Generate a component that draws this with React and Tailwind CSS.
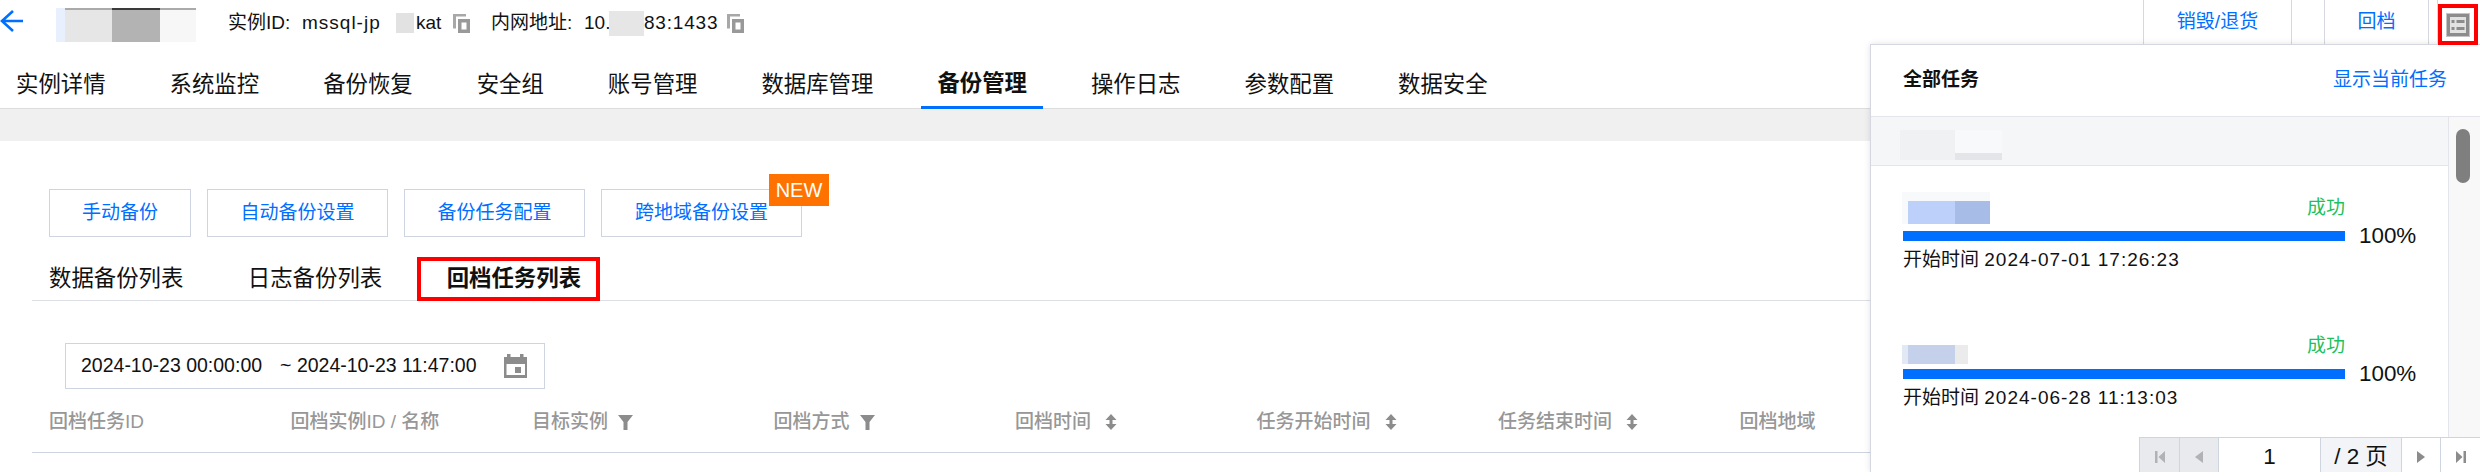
import React from 'react'

const tabs = ['实例详情', '系统监控', '备份恢复', '安全组', '账号管理', '数据库管理', '备份管理', '操作日志', '参数配置', '数据安全']

const CopyIcon = () => (
  <svg width="17" height="19" viewBox="0 0 17 19" className="shrink-0">
    <path d="M0 0h13v2.500H3v12H0z" fill="#a8a8a8" />
    <path fillRule="evenodd" d="M5 5h12v14H5zM8.500 8.500v7h5v-7z" fill="#999" />
  </svg>
)

const FilterIcon = () => (
  <svg width="15" height="15" viewBox="0 0 15 15" className="shrink-0">
    <path d="M0 0h15L9.500 7v8h-4V7z" fill="#8c8c8c" />
  </svg>
)

const SortIcon = () => (
  <svg width="12" height="16" viewBox="0 0 12 16" className="shrink-0 ml-[4px]">
    <path d="M6 0l5.500 6H.5zM6 16L.5 10h11z" fill="#8c8c8c" />
    <rect x="4.500" y="5" width="3" height="6" fill="#8c8c8c" />
  </svg>
)

const Column = ({ label, icon }) => (
  <div className="flex items-center gap-[10px] font-medium whitespace-nowrap">
    <span>{label}</span>
    {icon}
  </div>
)

const TaskItem = ({ blur, day, className }) => (
  <div className={`relative w-[546px] pl-[32px] ${className}`}>
    <div className="h-[39px] w-[442px] pt-[4px] text-right">
      <span className="text-[#1fc05e] text-[19px] leading-[23px]">成功</span>
    </div>
    {blur}
    <div className="flex items-center">
      <div className="h-[10px] w-[442px] bg-[#006eff]" />
      <span className="ml-[14px] text-[22.400px] leading-[10px] text-[#111]">100%</span>
    </div>
    <div className="mt-[7px] text-[19px] leading-[24px] text-[#111] whitespace-nowrap">
      开始时间 <span className="tracking-[1px]">{day}</span>
    </div>
  </div>
)

const PagerCell = ({ className, children }) => (
  <div className={`h-full flex items-center justify-center border-l border-[#cfd5de] pt-[4px] ${className}`}>{children}</div>
)

export default function App() {
  return (
    <div
      className="relative w-[2480px] h-[472px] overflow-hidden bg-white text-[#111]"
      style={{ fontFamily: '"Liberation Sans", "Noto Sans CJK SC", sans-serif' }}
    >
      {/* top bar */}
      <div className="flex h-[44px]">
        <svg width="24" height="24" viewBox="0 0 24 24" className="mt-[9px] shrink-0">
          <path d="M13 2L2 12l11 10M2 12h21" fill="none" stroke="#006eff" strokeWidth="2.600" />
        </svg>
        <div className="ml-[32px] mt-[8px] flex h-[34px] w-[140px] shrink-0">
          <div className="w-[9px] bg-[#e8f0fe]" />
          <div className="w-[47px] bg-[#e6e6e6] border-t-2 border-[#aaa]" />
          <div className="w-[48px] bg-[#b3b3b3] border-t-2 border-[#3a3a3a]" />
          <div className="w-[36px] bg-[#f7f7f7] border-t-2 border-[#aaa]" />
        </div>
        <div className="ml-[32px] flex items-center text-[19px] h-[46px] whitespace-nowrap">
          <span className="w-[74px]">实例ID:</span>
          <span className="w-[78px] tracking-[1px]">mssql-jp</span>
          <span className="ml-[16px] w-[18px] h-[20px] bg-[#e2e2e2]" />
          <span className="ml-[2px] w-[27px]">kat</span>
          <span className="ml-[10px]"><CopyIcon /></span>
          <span className="ml-[21px] w-[93px]">内网地址:</span>
          <span className="w-[25px]">10.</span>
          <span className="w-[35px] h-[25px] bg-[#e6e6e6]" />
          <span className="w-[73px] tracking-[0.800px]">83:1433</span>
          <span className="ml-[10px]"><CopyIcon /></span>
        </div>
        <div className="ml-auto flex text-[19px] text-[#006eff]">
          <div className="w-[149px] flex items-center justify-center border-x border-[#d5d8e0]">销毁/退货</div>
          <div className="ml-[32px] w-[105px] flex items-center justify-center border-x border-[#d5d8e0]">回档</div>
          <div className="ml-[8px] mr-[2px] w-[41px] border-l border-[#d5d8e0] relative z-10">
            <div className="mt-[4px] w-[40px] h-[41px] border-4 border-[#f00] flex items-center justify-center bg-white">
              <svg width="24" height="24" viewBox="0 0 24 24">
                <rect width="24" height="24" fill="#c4c4c4" />
                <rect x="1" y="1" width="22" height="22" fill="#8c8c8c" />
                <rect x="4" y="4" width="16" height="16" fill="#e2e2e2" />
                <path d="M5.500 7h3v3h-3zM10.500 7h8v3h-8zM5.500 14h3v3h-3zM10.500 14h8v3h-8z" fill="#8c8c8c" />
              </svg>
            </div>
          </div>
        </div>
      </div>

      {/* tabs */}
      <div className="flex gap-[32px] h-[65px] border-b border-[#dcdcdc] text-[22.400px]">
        {tabs.map((t) => (
          <div
            key={t}
            className={`px-[16px] h-[65px] flex items-center pt-[17px] whitespace-nowrap ${
              t === '备份管理' ? 'font-bold border-b-[3px] border-[#006eff]' : ''
            }`}
          >
            {t}
          </div>
        ))}
      </div>
      <div className="h-[32px] bg-[#f0f0f0]" />

      {/* content */}
      <div className="pl-[32px]">
        <div className="mt-[48px] ml-[17px] flex gap-[16px] text-[19px] text-[#006eff]">
          {[
            ['手动备份', 'w-[142px]'],
            ['自动备份设置', 'w-[181px]'],
            ['备份任务配置', 'w-[181px]'],
            ['跨地域备份设置', 'w-[201px]'],
          ].map(([t, w]) => (
            <div key={t} className={`relative h-[48px] flex items-center justify-center border border-[#ced4e0] ${w}`}>
              {t}
              {t === '跨地域备份设置' && (
                <span className="absolute left-[167px] -top-[16px] w-[60px] h-[32px] bg-[#ff7200] text-white text-[20px] flex items-center justify-center">NEW</span>
              )}
            </div>
          ))}
        </div>

        <div className="mt-[20px] pl-[17px] flex gap-[64.500px] h-[44px] border-b border-[#dcdfe6] text-[22.400px] whitespace-nowrap">
          <div className="flex items-center">数据备份列表</div>
          <div className="flex items-center">日志备份列表</div>
          <div className="-ml-[30px] pl-[26px] pr-[15px] h-[44px] flex items-center font-bold border-4 border-[#f00]">回档任务列表</div>
        </div>

        <div className="mt-[42px] ml-[33px] w-[480px] h-[46px] flex items-center border border-[#ced4e0] pl-[15px] pr-[17px] text-[19.500px] whitespace-nowrap">
          <span>2024-10-23 00:00:00</span>
          <span className="ml-[18px]">~ 2024-10-23 11:47:00</span>
          <svg width="23" height="24" viewBox="0 0 23 24" className="ml-auto shrink-0">
            <path d="M3 0h3.500v4H3zM16 0h3.500v4H16z" fill="#8c8c8c" />
            <path fillRule="evenodd" d="M0 3h23v21H0zM2.500 10v11h18.500V10z" fill="#8c8c8c" />
            <rect x="11" y="13" width="6" height="6" fill="#8c8c8c" />
          </svg>
        </div>

        <div className="mt-[13px] pl-[17px] h-[51px] border-b border-[#ced4e0] grid grid-cols-[241.500px_241.500px_241.500px_241.500px_241.500px_241.500px_241.500px_241.500px] items-center text-[19px] text-[#979797] pb-[10px]">
          <Column label="回档任务ID" />
          <Column label="回档实例ID / 名称" />
          <Column label="目标实例" icon={<FilterIcon />} />
          <Column label="回档方式" icon={<FilterIcon />} />
          <Column label="回档时间" icon={<SortIcon />} />
          <Column label="任务开始时间" icon={<SortIcon />} />
          <Column label="任务结束时间" icon={<SortIcon />} />
          <Column label="回档地域" />
        </div>
      </div>

      {/* all tasks panel */}
      <div className="absolute left-[1870px] top-[44px] right-0 bottom-0 bg-white border-l border-t border-[#d5d8e0] shadow-[0_0_6px_rgba(0,0,0,0.12)] flex flex-col">
        <div className="h-[72px] shrink-0 flex items-center justify-between pl-[32px] pr-[33px] text-[19px] border-b border-[#e3e5ea]">
          <span className="font-bold">全部任务</span>
          <span className="text-[#006eff]">显示当前任务</span>
        </div>
        <div className="flex h-[320px] shrink-0 overflow-hidden">
          <div className="w-[578px] border-r border-[#e3e5ea] overflow-hidden">
            <div className="h-[49px] bg-[#f5f6f8] border-b border-[#e3e5ea] pl-[29px] pt-[13px]">
              <div className="flex h-[30px] w-[102px]">
                <div className="w-[55px] bg-[#f0f1f2]" />
                <div className="w-[47px] flex flex-col">
                  <div className="h-[23px] bg-[#f8f9fa]" />
                  <div className="h-[7px] bg-[#e4e5e8]" />
                </div>
              </div>
            </div>
            <TaskItem
              className="mt-[26px]"
              day="2024-07-01 17:26:23"
              blur={
                <div className="absolute left-[31px] top-0 flex h-[32px] w-[88px] bg-[#f8f9fb] pt-[9px] pl-[6px]">
                  <div className="w-[47px] bg-[#bdd0fa]" />
                  <div className="w-[35px] bg-[#a7bde8]" />
                </div>
              }
            />
            <TaskItem
              className="mt-[58px]"
              day="2024-06-28 11:13:03"
              blur={
                <div className="absolute left-[31px] top-[15px] flex h-[19px] w-[66px]">
                  <div className="w-[6px] bg-[#e3e8f5]" />
                  <div className="w-[47px] bg-[#c5d0ea]" />
                  <div className="w-[13px] bg-[#ebebeb]" />
                </div>
              }
            />
          </div>
          <div className="flex-1 bg-[#f8f8f8] pt-[12px] pl-[7px]">
            <div className="w-[14px] h-[54px] rounded-full bg-[#7f7f7f]" />
          </div>
        </div>
        <div className="flex justify-end h-[35px] shrink-0">
          <div className="flex border-t border-[#cfd5de] text-[22.400px] h-[35px]">
            <PagerCell className="w-[40px] bg-[#e8eaee]">
              <svg width="10" height="12" viewBox="0 0 10 12"><path d="M0 0h2.500v12H0zM10 0v12L3.500 6z" fill="#b0b2b6" /></svg>
            </PagerCell>
            <PagerCell className="w-[39px] bg-[#e8eaee]">
              <svg width="8" height="12" viewBox="0 0 8 12"><path d="M8 0v12L0 6z" fill="#b0b2b6" /></svg>
            </PagerCell>
            <PagerCell className="w-[102px]">1</PagerCell>
            <PagerCell className="w-[81px] bg-[#f2f4f8]">/ 2 页</PagerCell>
            <PagerCell className="w-[39px]">
              <svg width="8" height="12" viewBox="0 0 8 12"><path d="M0 0v12l8-6z" fill="#8c8c8c" /></svg>
            </PagerCell>
            <PagerCell className="w-[40px]">
              <svg width="10" height="12" viewBox="0 0 10 12"><path d="M0 0v12l6.500-6zM7.500 0H10v12H7.500z" fill="#8c8c8c" /></svg>
            </PagerCell>
          </div>
        </div>
      </div>
    </div>
  )
}
